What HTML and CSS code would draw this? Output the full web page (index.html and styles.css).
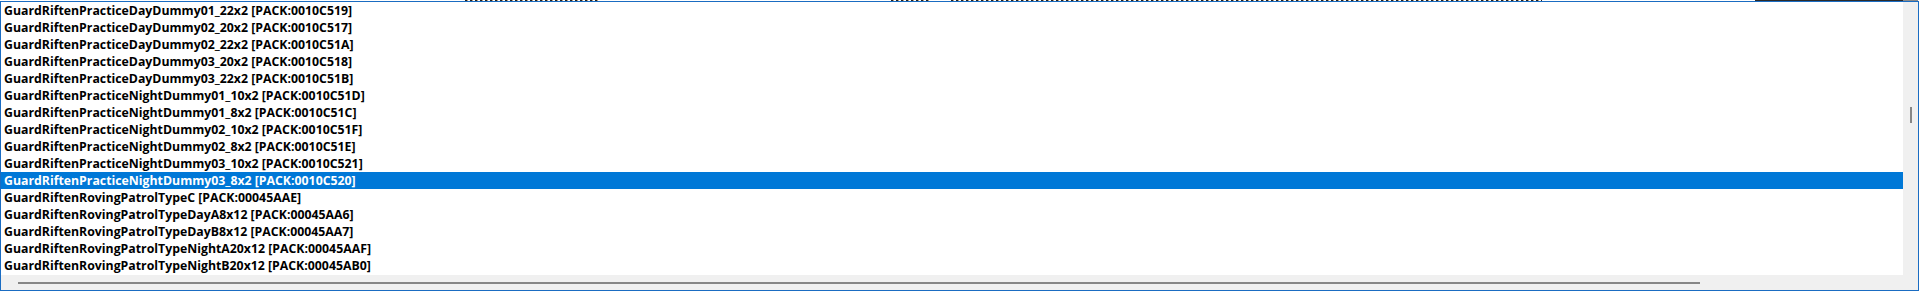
FILE: index.html
```html
<!DOCTYPE html>
<html>
<head>
<meta charset="utf-8">
<link rel="stylesheet" href="styles.css">
</head>
<body>
<div class="screen">
  <div class="topstrip">
    <span class="frag f1"></span><span class="frag f2"></span><span class="frag f3"></span><span class="frag f4"></span><span class="frag f5"></span>
  </div>
  <div class="popup">
    <div class="list">
      <div class="row">GuardRiftenPracticeDayDummy01_22x2 [PACK:0010C519]</div>
      <div class="row">GuardRiftenPracticeDayDummy02_20x2 [PACK:0010C517]</div>
      <div class="row">GuardRiftenPracticeDayDummy02_22x2 [PACK:0010C51A]</div>
      <div class="row">GuardRiftenPracticeDayDummy03_20x2 [PACK:0010C518]</div>
      <div class="row">GuardRiftenPracticeDayDummy03_22x2 [PACK:0010C51B]</div>
      <div class="row">GuardRiftenPracticeNightDummy01_10x2 [PACK:0010C51D]</div>
      <div class="row">GuardRiftenPracticeNightDummy01_8x2 [PACK:0010C51C]</div>
      <div class="row">GuardRiftenPracticeNightDummy02_10x2 [PACK:0010C51F]</div>
      <div class="row">GuardRiftenPracticeNightDummy02_8x2 [PACK:0010C51E]</div>
      <div class="row">GuardRiftenPracticeNightDummy03_10x2 [PACK:0010C521]</div>
      <div class="row selected">GuardRiftenPracticeNightDummy03_8x2 [PACK:0010C520]</div>
      <div class="row">GuardRiftenRovingPatrolTypeC [PACK:00045AAE]</div>
      <div class="row">GuardRiftenRovingPatrolTypeDayA8x12 [PACK:00045AA6]</div>
      <div class="row">GuardRiftenRovingPatrolTypeDayB8x12 [PACK:00045AA7]</div>
      <div class="row">GuardRiftenRovingPatrolTypeNightA20x12 [PACK:00045AAF]</div>
      <div class="row">GuardRiftenRovingPatrolTypeNightB20x12 [PACK:00045AB0]</div>
    </div>
    <div class="vscroll"><div class="vthumb"></div></div>
    <div class="hscroll"><div class="hthumb"></div></div>
  </div>
</div>
</body>
</html>
```

FILE: styles.css
```css
html, body {
  margin: 0;
  padding: 0;
  background: #ffffff;
}
.screen {
  width: 1920px;
  height: 292px;
  overflow: hidden;
  background: #ffffff;
}
.topstrip {
  height: 1px;
  display: flex;
  background: #ffffff;
}
.frag {
  height: 1px;
  background: repeating-linear-gradient(90deg, #222 0 2px, #c8a070 2px 3px, #fff 3px 5px);
}
.f1 { margin-left: 465px; width: 133px; }
.f2 { margin-left: 293px; width: 40px; }
.f3 { margin-left: 20px; width: 591px; }
.f4 { margin-left: 213px; width: 148px; background: #2a2a2a; }
.f5 { width: 15px; background: #8a8a8a; }
.popup {
  width: 1917px;
  height: 288px;
  border: 1px solid #1a6cc2;
  display: grid;
  grid-template-columns: 1902px 15px;
  grid-template-rows: 273px 15px;
  background: #f0f0f0;
}
.list {
  background: #ffffff;
  overflow: hidden;
  font-family: "Open Sans", "Noto Sans", sans-serif;
  font-weight: 700;
  font-size: 12.3px;
  color: #000000;
}
.row {
  height: 16px;
  padding-top: 1px;
  line-height: 16px;
  padding-left: 3px;
  white-space: nowrap;
}
.row.selected {
  background: #0078d7;
  color: #ffffff;
}
.vscroll {
  background: #f0f0f0;
  grid-row: 1 / span 2;
  grid-column: 2;
}
.vthumb {
  margin-top: 105px;
  margin-left: 7px;
  width: 2px;
  height: 16px;
  background: #868686;
}
.hscroll {
  background: #f0f0f0;
  grid-row: 2;
  grid-column: 1;
}
.hthumb {
  margin-top: 7px;
  margin-left: 17px;
  width: 1682px;
  height: 2px;
  background: #868686;
}
```
